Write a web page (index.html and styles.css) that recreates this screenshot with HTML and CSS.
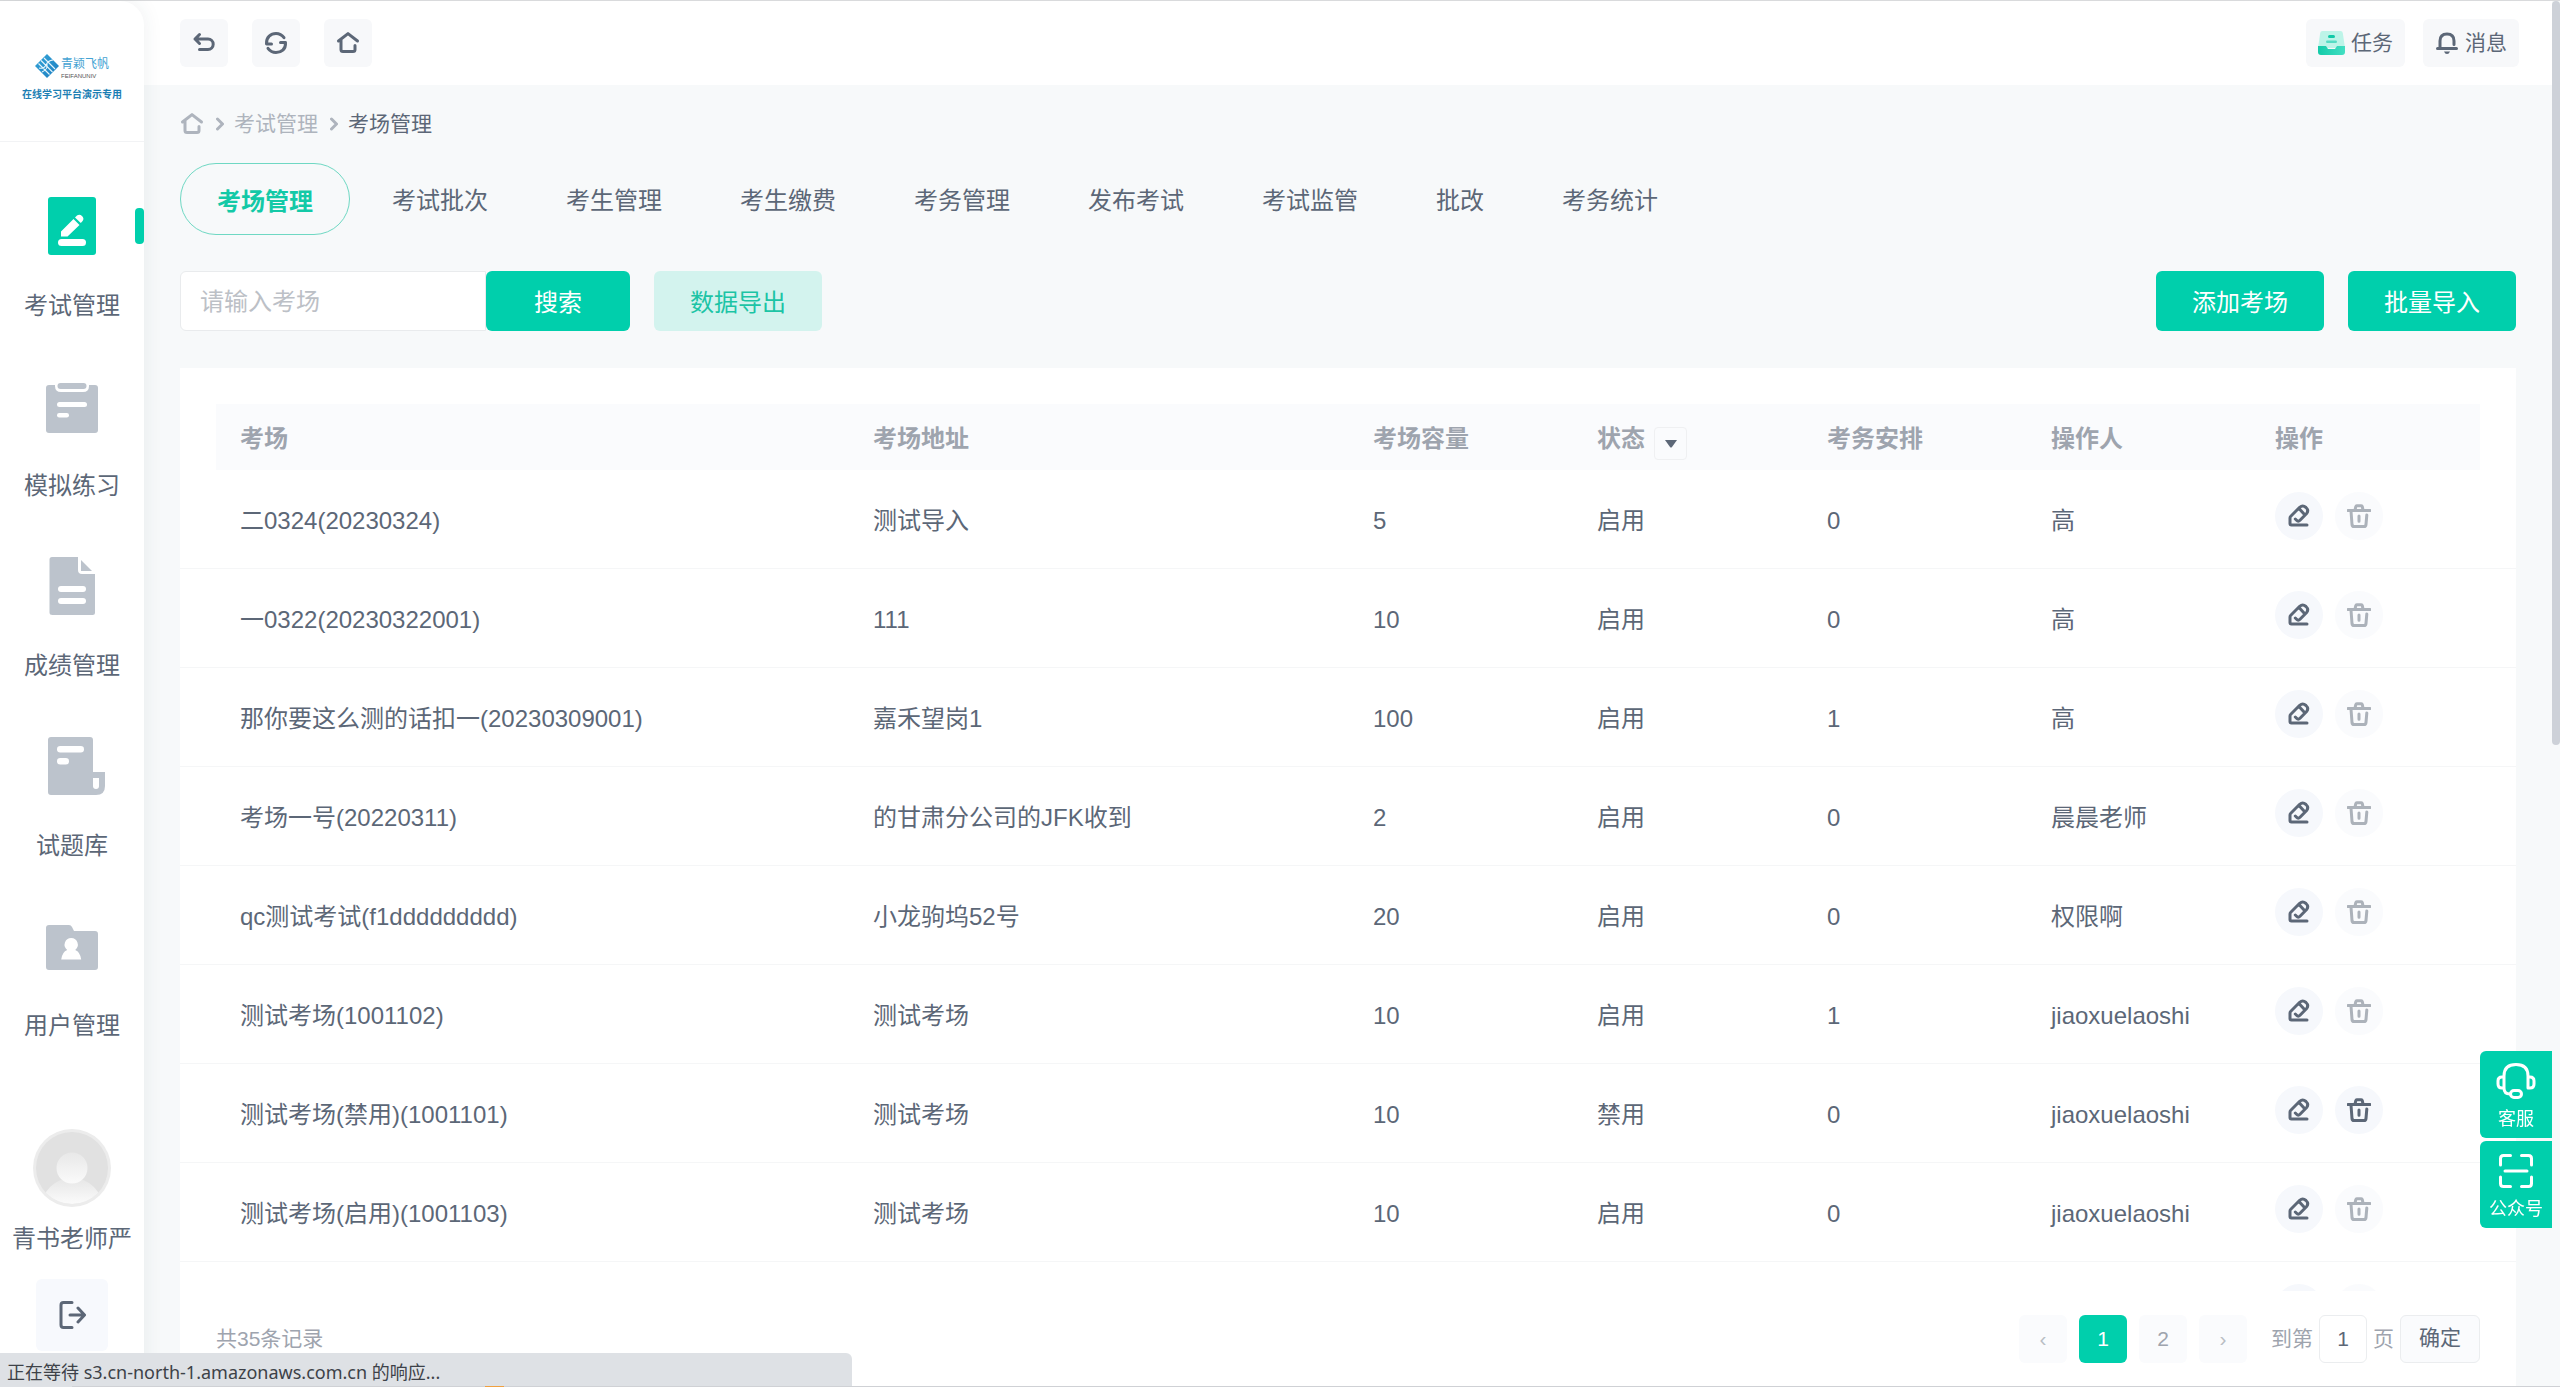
FILE: index.html
```html
<!DOCTYPE html>
<html lang="zh-CN">
<head>
<meta charset="utf-8">
<meta name="viewport" content="width=device-width, initial-scale=1">
<title>考场管理</title>
<link rel="stylesheet" href="styles.css">
</head>
<body>
<svg class="sprite" aria-hidden="true">
  <symbol id="i-home" viewBox="0 0 24 24"><path d="M2.5 10 12 2.6 21.500 10M5 9v9.500q0 2 2 2h10q2 0 2-2V14.500" /></symbol>
  <symbol id="i-chev" viewBox="0 0 8 14"><path d="M1.500 2 6.500 7 1.500 12"/></symbol>
  <symbol id="i-edit" viewBox="0 0 24 24"><path d="M20 21H4.500Q3 21 3 19.500V14q0-1 .8-1.800L12.700 3.300q3-2.700 6.300.2 3.200 3 .4 6.300L13 16.300q-1.800 1.800-3.400 0L8.300 15M12 4.500l5.500 6"/></symbol>
  <symbol id="i-trash" viewBox="0 0 24 24"><path d="M1 6.500h22M8 6 8.800 2.600q.2-.8 1-.8h4.500q.8 0 1 .8L16 6M4 7l1 13.500q.2 2 2 2h10q1.800 0 2-2L19.800 11M12 12v5.200"/></symbol>
</svg>
<div class="app">
  <aside class="side">
    <div class="logo">
      <div class="logo-row">
        <svg class="logo-mark" viewBox="0 0 24 24"><defs><linearGradient id="lg" x1="0" y1="0" x2="1" y2="1"><stop offset="0" stop-color="#35a5d8"/><stop offset="1" stop-color="#1c7dc0"/></linearGradient></defs><path d="M12 0 24 12 12 24 0 12z" fill="url(#lg)"/><path d="M6 6.500 17.500 18M9 4 20 15M3.500 9.500 14.500 20.500M7 18Q13 15 12 11T18 6M4 14q5 1 7-3t6-5" fill="none" stroke="#e6f4fb" stroke-width="1.100"/></svg>
        <div class="logo-name"><span class="logo-cn">青颖飞帆</span><span class="logo-en">FEIFANUNIV</span></div>
      </div>
      <div class="logo-sub">在线学习平台演示专用</div>
    </div>
    <nav class="nav">
      <a href="#" class="nav-item active"><svg viewBox="0 0 60 60"><rect x="6" y="1" width="48" height="58" rx="3" fill="currentColor"/><g fill="#fff"><rect x="16" y="43" width="28" height="7" rx="3.500"/><path d="M19 40.500V35.500L31.500 23 37.500 29 25.500 40.500zM33 21.500 35 19.600q2.500-2 5 .4t.6 5L38.800 27z"/></g></svg><span>考试管理</span></a>
      <a href="#" class="nav-item"><svg viewBox="0 0 60 60"><rect x="4" y="9" width="52" height="48" rx="3" fill="currentColor"/><path d="M13 9v1q0 6 6 6h22q6 0 6-6V9z" fill="#fff"/><rect x="15.500" y="7" width="29" height="6" rx="3" fill="currentColor"/><g fill="#fff"><rect x="15" y="26" width="30" height="5" rx="2.500"/><rect x="15" y="37" width="12" height="4.500" rx="2.200"/></g></svg><span>模拟练习</span></a>
      <a href="#" class="nav-item"><svg viewBox="0 0 60 60"><path d="M10 1h26v13q0 4 4 4h13v38.500q0 2.500-2.500 2.500h-40Q7.500 59 7.500 56.500v-53Q7.500 1 10 1z" fill="currentColor"/><path d="M39 4v11h11z" fill="currentColor"/><g fill="#fff"><rect x="16" y="30" width="28" height="6" rx="3"/><rect x="16" y="42" width="28" height="6" rx="3"/></g></svg><span>成绩管理</span></a>
      <a href="#" class="nav-item"><svg viewBox="0 0 60 60"><path d="M9 1h39q3 0 3 3v32h12v14q0 9-9 9H9q-3 0-3-3V4q0-3 3-3z" fill="currentColor"/><g fill="#fff"><rect x="15" y="10" width="27" height="6.500" rx="3.200"/><rect x="15" y="22" width="12" height="6.500" rx="3.200"/><path d="M51 42h6v8q0 3-3 3t-3-3z"/></g></svg><span>试题库</span></a>
      <a href="#" class="nav-item"><svg viewBox="0 0 60 60"><path d="M7 9h20q2 0 3 2l2 4h21q3 0 3 3v33q0 3-3 3H7q-3 0-3-3V12q0-3 3-3z" fill="currentColor"/><path d="M29.200 22a6.700 6.700 0 0 1 4 12q5 2 6 9.500H19.200q1-7.500 6-9.500a6.700 6.700 0 0 1 4-12z" fill="#fff"/></svg><span>用户管理</span></a>
    </nav>
    <div class="user">
      <svg class="avatar" viewBox="0 0 78 78"><defs><linearGradient id="av" x1="0" y1="0" x2="0" y2="1"><stop offset="0" stop-color="#e8e8e8"/><stop offset="1" stop-color="#fafafa"/></linearGradient><linearGradient id="av2" x1="0" y1="0" x2="0" y2="0.4"><stop offset="0" stop-color="#e6e6e6"/><stop offset="1" stop-color="#fafafa"/></linearGradient><clipPath id="ac"><circle cx="39" cy="39" r="36"/></clipPath></defs><circle cx="39" cy="39" r="39" fill="#ececec"/><circle cx="39" cy="39" r="36" fill="#e1e1e1"/><circle cx="39" cy="80" r="31" fill="url(#av2)" clip-path="url(#ac)"/><circle cx="39" cy="39" r="15.500" fill="url(#av)"/></svg>
      <span class="user-name">青书老师严</span>
      <button class="logout" type="button" aria-label="退出"><svg viewBox="0 0 28 30"><path d="M14 2.500H5.500Q3 2.500 3 5v20q0 2.500 2.500 2.500H14M12 15h14M20 8l6.500 7L20 22"/></svg></button>
    </div>
  </aside>

  <div class="page">
    <header class="top">
      <div class="tools">
        <button type="button" aria-label="返回"><svg class="ico" viewBox="0 0 24 24"><path d="M7.500 3.500 3 8l4.500 4.500M3 8h13a5.200 5.200 0 0 1 0 10.400H7.500"/></svg></button>
        <button type="button" aria-label="刷新"><svg class="ico" viewBox="0 0 24 24"><path d="M7.500 13H2.500C2 6 7 2.500 12 2.500q5 0 8 4.200M16.500 11.500h5c.5 7-4.500 10-9.500 10q-5 0-8-4.200"/></svg></button>
        <button type="button" aria-label="首页"><svg class="ico"><use href="#i-home"/></svg></button>
      </div>
      <div class="tools right">
        <button type="button"><svg class="task" viewBox="0 0 27 24"><defs><linearGradient id="tk" x1="0" y1="0" x2="1" y2="0"><stop offset="0" stop-color="#13cba9"/><stop offset="1" stop-color="#43dfc3"/></linearGradient></defs><path d="M4.500 0h18q2 0 2.300 2L27 17H0L2.200 2Q2.500 0 4.500 0z" fill="#bdf4e8"/><path d="M0 15h8l2 3h7l2-3h8v6q0 3-3 3H3q-3 0-3-3z" fill="url(#tk)"/><rect x="10" y="4" width="7" height="3" rx="1.500" fill="#12c9a8"/><rect x="8" y="9.500" width="11" height="2.500" rx="1.200" fill="#55dcc4"/></svg>任务</button>
        <button type="button"><svg class="ico" viewBox="0 0 24 24"><path d="M2.500 17.500h19M5 17V10Q5 3 12 3t7 7v3.500"/><path d="M9 20.500h6q-1 2.500-3 2.500t-3-2.500z" fill="currentColor" stroke="none"/></svg>消息</button>
      </div>
    </header>

    <main class="main">
      <nav class="crumbs" aria-label="面包屑">
        <a href="#" class="crumb-home" aria-label="首页"><svg class="ico"><use href="#i-home"/></svg></a>
        <svg class="chev"><use href="#i-chev"/></svg>
        <a href="#">考试管理</a>
        <svg class="chev"><use href="#i-chev"/></svg>
        <span class="here">考场管理</span>
      </nav>
      <nav class="tabs">
        <a href="#" class="on">考场管理</a><a href="#">考试批次</a><a href="#">考生管理</a><a href="#">考生缴费</a><a href="#">考务管理</a><a href="#">发布考试</a><a href="#">考试监管</a><a href="#">批改</a><a href="#">考务统计</a>
      </nav>
      <div class="bar">
        <form class="search"><input type="text" placeholder="请输入考场" aria-label="考场"><button class="btn btn-search" type="button">搜索</button></form>
        <button class="btn soft" type="button">数据导出</button>
        <div class="bar-right">
          <button class="btn" type="button">添加考场</button>
          <button class="btn" type="button">批量导入</button>
        </div>
      </div>

      <section class="card">
        <div class="table-wrap">
          <table>
            <colgroup><col><col class="c-addr"><col class="c-std"><col class="c-state"><col class="c-std"><col class="c-std"><col class="c-act"></colgroup>
            <thead><tr><th>考场</th><th>考场地址</th><th>考场容量</th><th><div class="state">状态<button type="button" class="filter" aria-label="筛选状态"><svg viewBox="0 0 12 8"><path d="M0 0h12L7 7q-1 1-2 0z" fill="currentColor"/></svg></button></div></th><th>考务安排</th><th>操作人</th><th>操作</th></tr></thead>
            <tbody>
              <tr><td>二0324(20230324)</td><td>测试导入</td><td>5</td><td>启用</td><td>0</td><td>高</td><td><div class="acts"><button type="button" aria-label="编辑"><svg class="ico"><use href="#i-edit"/></svg></button><button type="button" aria-label="删除" disabled><svg class="ico"><use href="#i-trash"/></svg></button></div></td></tr>
              <tr><td>一0322(20230322001)</td><td>111</td><td>10</td><td>启用</td><td>0</td><td>高</td><td><div class="acts"><button type="button" aria-label="编辑"><svg class="ico"><use href="#i-edit"/></svg></button><button type="button" aria-label="删除" disabled><svg class="ico"><use href="#i-trash"/></svg></button></div></td></tr>
              <tr><td>那你要这么测的话扣一(20230309001)</td><td>嘉禾望岗1</td><td>100</td><td>启用</td><td>1</td><td>高</td><td><div class="acts"><button type="button" aria-label="编辑"><svg class="ico"><use href="#i-edit"/></svg></button><button type="button" aria-label="删除" disabled><svg class="ico"><use href="#i-trash"/></svg></button></div></td></tr>
              <tr><td>考场一号(20220311)</td><td>的甘肃分公司的JFK收到</td><td>2</td><td>启用</td><td>0</td><td>晨晨老师</td><td><div class="acts"><button type="button" aria-label="编辑"><svg class="ico"><use href="#i-edit"/></svg></button><button type="button" aria-label="删除" disabled><svg class="ico"><use href="#i-trash"/></svg></button></div></td></tr>
              <tr><td>qc测试考试(f1ddddddddd)</td><td>小龙驹坞52号</td><td>20</td><td>启用</td><td>0</td><td>权限啊</td><td><div class="acts"><button type="button" aria-label="编辑"><svg class="ico"><use href="#i-edit"/></svg></button><button type="button" aria-label="删除" disabled><svg class="ico"><use href="#i-trash"/></svg></button></div></td></tr>
              <tr><td>测试考场(1001102)</td><td>测试考场</td><td>10</td><td>启用</td><td>1</td><td>jiaoxuelaoshi</td><td><div class="acts"><button type="button" aria-label="编辑"><svg class="ico"><use href="#i-edit"/></svg></button><button type="button" aria-label="删除" disabled><svg class="ico"><use href="#i-trash"/></svg></button></div></td></tr>
              <tr><td>测试考场(禁用)(1001101)</td><td>测试考场</td><td>10</td><td>禁用</td><td>0</td><td>jiaoxuelaoshi</td><td><div class="acts"><button type="button" aria-label="编辑"><svg class="ico"><use href="#i-edit"/></svg></button><button type="button" aria-label="删除"><svg class="ico"><use href="#i-trash"/></svg></button></div></td></tr>
              <tr><td>测试考场(启用)(1001103)</td><td>测试考场</td><td>10</td><td>启用</td><td>0</td><td>jiaoxuelaoshi</td><td><div class="acts"><button type="button" aria-label="编辑"><svg class="ico"><use href="#i-edit"/></svg></button><button type="button" aria-label="删除" disabled><svg class="ico"><use href="#i-trash"/></svg></button></div></td></tr>
              <tr><td></td><td></td><td></td><td></td><td></td><td></td><td><div class="acts"><button type="button" aria-label="编辑"><svg class="ico"><use href="#i-edit"/></svg></button><button type="button" aria-label="删除" disabled><svg class="ico"><use href="#i-trash"/></svg></button></div></td></tr>
            </tbody>
          </table>
        </div>
        <footer class="foot">
          <span>共35条记录</span>
          <div class="pager">
            <div class="pages"><button type="button" class="arrow">‹</button><button type="button" class="cur">1</button><button type="button">2</button><button type="button" class="arrow">›</button></div>
            <div class="jump"><label for="goto">到第</label><input id="goto" type="text" value="1"><span>页</span><button type="button">确定</button></div>
          </div>
        </footer>
      </section>
    </main>
  </div>
  <div class="scroll"><div class="thumb"></div></div>
</div>

<div class="float">
  <button type="button"><svg viewBox="0 0 40 36"><path d="M8 26V13Q8 1.500 20 1.500T32 13v12M7.500 14H6q-4 0-4 4v3q0 4 4 4h1.500M32.500 14H34q4 0 4 4v3q0 4-4 4h-1.500M8 25q0 6 6 6"/><rect x="14.500" y="27.500" width="11" height="7" rx="3.500"/></svg>客服</button>
  <button type="button"><svg viewBox="0 0 40 36"><path d="M4.500 12V5.500q0-3 3-3h7M25.500 2.500h7q3 0 3 3V12M4.500 24v6.500q0 3 3 3h7M25.500 33.500h7q3 0 3-3V24M9 18h22"/></svg>公众号</button>
</div>
<div class="status">正在等待 s3.cn-north-1.amazonaws.com.cn 的响应...</div>
<div class="edge"></div>
</body>
</html>
```

FILE: styles.css
```css
:root {
  --green: #00cfac;
  --ink: #5c6777;
  --mute: #9ea4ae;
  --bg: #f7f9fa;
}
* { box-sizing: border-box; }
body {
  margin: 0;
  background: var(--bg);
  color: var(--ink);
  font: 24px/36px "Liberation Sans", "Noto Sans CJK SC", sans-serif;
  overflow: hidden;
}
button, input { font: inherit; color: inherit; border: 0; margin: 0; padding: 0; }
button { background: none; cursor: pointer; }
a { color: inherit; text-decoration: none; }
.sprite { position: absolute; width: 0; height: 0; }
.ico { display: block; width: 24px; height: 24px; }
.ico, .chev { fill: none; stroke: currentColor; stroke-width: 3; stroke-linecap: round; stroke-linejoin: round; }

.app { display: flex; height: 100vh; border-top: 1px solid #d9dadc; background: #fff; }

/* sidebar */
.side {
  position: relative;
  z-index: 2;
  flex: none;
  display: flex;
  flex-direction: column;
  width: 144px;
  padding-bottom: 36px;
  background: #fff;
  border-radius: 0 24px 0 0;
  box-shadow: 0 0 20px rgba(40, 60, 80, .08);
}
.logo {
  display: flex;
  flex-direction: column;
  align-items: center;
  gap: 9px;
  height: 141px;
  padding-top: 53px;
  border-bottom: 1px solid #f2f3f5;
}
.logo-row { display: flex; gap: 2px; }
.logo-mark { width: 24px; height: 24px; }
.logo-name { display: flex; flex-direction: column; color: #45a3d3; }
.logo-cn { font-size: 12px; line-height: 20px; }
.logo-en { font-size: 6px; line-height: 4px; color: #555; }
.logo-sub { font-size: 10px; line-height: 16px; font-weight: 700; color: #1c7fb4; white-space: nowrap; }
.nav { padding-top: 54px; }
.nav-item {
  position: relative;
  display: flex;
  flex-direction: column;
  align-items: center;
  gap: 32px;
  height: 180px;
}
.nav-item svg { width: 60px; height: 60px; overflow: visible; color: #bcc3cc; }
.nav-item.active svg { color: var(--green); }
.nav-item.active::after {
  content: "";
  position: absolute;
  top: 12px;
  right: 0;
  width: 9px;
  height: 36px;
  border-radius: 4px;
  background: var(--green);
}
.user { display: flex; flex-direction: column; align-items: center; margin-top: auto; white-space: nowrap; }
.avatar { width: 78px; height: 78px; }
.user-name { margin: 14px 0 22px; }
.logout { display: grid; place-items: center; width: 72px; height: 72px; border-radius: 6px; background: #f7f9fd; }
.logout svg { width: 28px; height: 30px; fill: none; stroke: currentColor; stroke-width: 3; stroke-linecap: round; stroke-linejoin: round; }

/* header */
.page { flex: 1; min-width: 0; display: flex; flex-direction: column; }
.top { display: flex; justify-content: space-between; padding: 18px 33px 18px 36px; background: #fff; }
.tools { display: flex; gap: 24px; }
.tools.right { gap: 18px; }
.tools button {
  display: flex;
  align-items: center;
  gap: 6px;
  height: 48px;
  padding: 0 12px;
  border-radius: 6px;
  background: #f7f8fa;
  font-size: 21px;
}
.task { width: 27px; height: 24px; }

/* content */
.main { flex: 1; min-height: 0; display: flex; flex-direction: column; padding: 24px 36px 0; background: var(--bg); }
.crumbs { display: flex; align-items: center; height: 30px; font-size: 21px; line-height: 30px; color: #aeb4bd; }
.chev { width: 8px; height: 14px; margin: 0 10px 0 12px; }
.here { color: var(--ink); }
.tabs { display: flex; gap: 6px; margin-top: 24px; }
.tabs a { height: 72px; padding: 0 36px; line-height: 75px; white-space: nowrap; }
.tabs .on { border: 1px solid #6fd8c3; border-radius: 36px; color: #13c9a7; font-weight: 700; }
.bar { display: flex; gap: 24px; margin-top: 36px; }
.search { display: flex; }
.search input {
  width: 306px;
  height: 60px;
  padding: 2px 19px 0;
  border: 1px solid #e9ebed;
  border-radius: 6px 0 0 6px;
  background: #fff;
}
.search input::placeholder { color: #bcc0c6; opacity: 1; }
.btn { width: 168px; height: 60px; padding-top: 3px; border-radius: 6px; background: var(--green); color: #fff; }
.btn-search { width: 144px; }
.btn.soft { background: #d3f3ee; color: #1cc4a5; }
.bar-right { display: flex; gap: 24px; margin-left: auto; }

.card { flex: 1; min-height: 0; display: flex; flex-direction: column; margin-top: 37px; background: #fff; }
.table-wrap { flex: 1; min-height: 0; padding-top: 36px; overflow: hidden; }
table { width: 100%; table-layout: fixed; border-collapse: separate; border-spacing: 0; }
.c-addr { width: 500px; }
.c-std { width: 224px; }
.c-state { width: 230px; }
.c-act { width: 265px; }
th, td { padding: 3px 0 0 24px; text-align: left; white-space: nowrap; }
th { height: 66px; background: #fafbfd; color: var(--mute); }
th:first-child { border-left: 36px solid #fff; }
th:last-child { border-right: 36px solid #fff; }
td { height: 99px; border-bottom: 1px solid #f5f6f7; }
td:first-child { padding-left: 60px; }
.state { display: flex; align-items: center; gap: 9px; }
.filter { display: grid; place-items: center; width: 33px; height: 33px; margin-top: 10px; border: 1px solid #eff0f2; border-radius: 4px; color: var(--ink); }
.filter svg { width: 12px; height: 8px; }
.acts { display: flex; gap: 12px; padding-bottom: 10px; }
.acts button { display: grid; place-items: center; width: 48px; height: 48px; border-radius: 50%; background: #f6f8fc; }
.acts button:disabled { opacity: .5; }

.foot { display: flex; align-items: center; justify-content: space-between; height: 96px; padding: 0 36px; font-size: 21px; color: var(--mute); }
.pager { display: flex; gap: 24px; }
.pages { display: flex; gap: 12px; }
.pages button { width: 48px; height: 48px; border-radius: 6px; background: #fafbfd; }
.pages .arrow { color: #b9bdc4; }
.pages .cur { background: var(--green); color: #fff; }
.jump { display: flex; align-items: center; gap: 6px; }
.jump input { width: 48px; height: 48px; border: 1px solid #ebedef; border-radius: 6px; text-align: center; color: var(--ink); background: #fff; }
.jump button { width: 80px; height: 48px; padding-bottom: 2px; border: 1px solid #ebedef; border-radius: 6px; color: var(--ink); background: #fafbfd; }

.scroll { flex: none; width: 8px; background: var(--bg); }
.thumb { height: 744px; border-radius: 4px; background: #cdd1d8; }

/* overlays */
.float { position: fixed; right: 8px; bottom: 159px; z-index: 3; display: flex; flex-direction: column; gap: 3px; }
.float button {
  display: flex;
  flex-direction: column;
  align-items: center;
  gap: 8px;
  width: 72px;
  height: 87px;
  padding-top: 12px;
  border-radius: 6px 0 0 6px;
  background: var(--green);
  color: #fff;
  font-size: 18px;
  line-height: 24px;
}
.float svg { width: 40px; height: 36px; fill: none; stroke: #fff; stroke-width: 3; stroke-linecap: round; }
.status {
  position: fixed;
  left: 0;
  bottom: 0;
  z-index: 4;
  width: 852px;
  height: 34px;
  padding: 2px 7px 0;
  border-radius: 0 6px 0 0;
  background: #dee1e5;
  color: #3d4148;
  font: 18px/34px "Noto Sans", "Noto Sans CJK SC", sans-serif;
}
.edge {
  position: fixed;
  right: 0;
  bottom: 0;
  left: 72px;
  z-index: 5;
  height: 1px;
  background: linear-gradient(90deg, transparent 413px, #f0a040 413px 432px, transparent 432px), #cfd1d5;
}
```
